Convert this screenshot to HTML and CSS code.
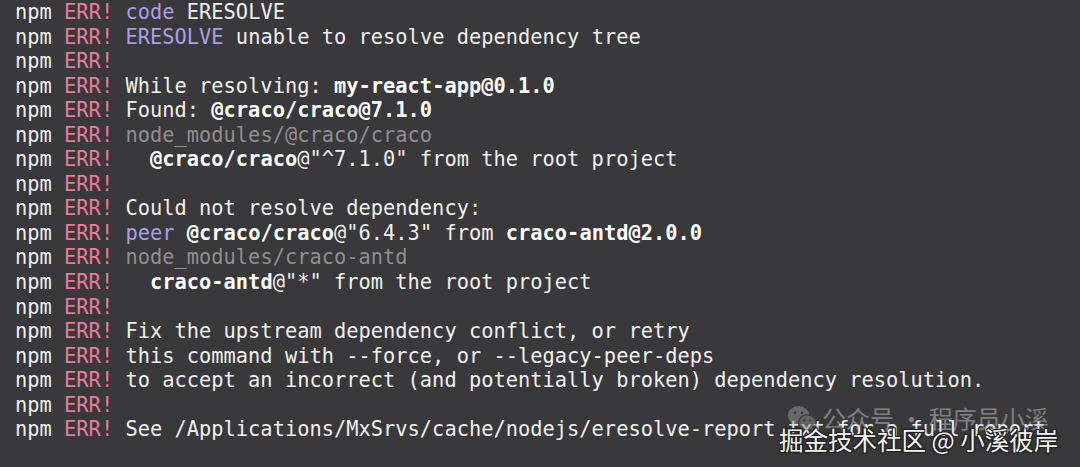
FILE: index.html
```html
<!DOCTYPE html>
<html lang="en">
<head>
<meta charset="utf-8">
<link rel="stylesheet" href="styles.css">
</head>
<body>
<div class="term">
<div class="ln"><span class="w">npm</span> <span class="e">ERR!</span> <span class="p">code</span> ERESOLVE</div>
<div class="ln">npm <span class="e">ERR!</span> <span class="p">ERESOLVE</span> unable to resolve dependency tree</div>
<div class="ln">npm <span class="e">ERR!</span></div>
<div class="ln">npm <span class="e">ERR!</span> While resolving: <b>my-react-app@0.1.0</b></div>
<div class="ln">npm <span class="e">ERR!</span> Found: <b>@craco/craco@7.1.0</b></div>
<div class="ln">npm <span class="e">ERR!</span> <span class="g">node_modules/@craco/craco</span></div>
<div class="ln">npm <span class="e">ERR!</span>   <b>@craco/craco</b>@"^7.1.0" from the root project</div>
<div class="ln">npm <span class="e">ERR!</span></div>
<div class="ln">npm <span class="e">ERR!</span> Could not resolve dependency:</div>
<div class="ln">npm <span class="e">ERR!</span> <span class="p">peer</span> <b>@craco/craco</b>@"6.4.3" from <b>craco-antd@2.0.0</b></div>
<div class="ln">npm <span class="e">ERR!</span> <span class="g">node_modules/craco-antd</span></div>
<div class="ln">npm <span class="e">ERR!</span>   <b>craco-antd</b>@"*" from the root project</div>
<div class="ln">npm <span class="e">ERR!</span></div>
<div class="ln">npm <span class="e">ERR!</span> Fix the upstream dependency conflict, or retry</div>
<div class="ln">npm <span class="e">ERR!</span> this command with --force, or --legacy-peer-deps</div>
<div class="ln">npm <span class="e">ERR!</span> to accept an incorrect (and potentially broken) dependency resolution.</div>
<div class="ln">npm <span class="e">ERR!</span></div>
<div class="ln">npm <span class="e">ERR!</span> See /Applications/MxSrvs/cache/nodejs/eresolve-report.txt for a full report.</div>
</div>
<div class="wm1">
<svg class="wx" width="30" height="28" viewBox="0 0 34 30">
<ellipse cx="13" cy="12" rx="12" ry="10.5" fill="#9a9a9a"/>
<path d="M5 19 L4 24 L10 20.5 Z" fill="#9a9a9a"/>
<ellipse cx="23" cy="20" rx="10" ry="8.5" fill="#8a8a8a" stroke="#3a393c" stroke-width="1.5"/>
<path d="M29 26 L31 30 L25 27.5 Z" fill="#8a8a8a"/>
<circle cx="9" cy="9" r="1.5" fill="#3a393c"/>
<circle cx="17" cy="9" r="1.5" fill="#3a393c"/>
<circle cx="19.5" cy="18" r="1.3" fill="#3a393c"/>
<circle cx="26.5" cy="18" r="1.3" fill="#3a393c"/>
</svg>
<span class="wmt">公众号 · 程序员小溪</span>
</div>
<div class="wm2">掘金技术社区 @ 小溪彼岸</div>
</body>
</html>
```
FILE: styles.css
```css
html, body {
  margin: 0;
  padding: 0;
  background: #39383b;
  width: 1080px;
  height: 467px;
  overflow: hidden;
}
.term {
  padding: 0 0 0 15px;
  font-family: "DejaVu Sans Mono", monospace;
  font-size: 20.35px;
  line-height: 24.55px;
  color: #f1f1f1;
  letter-spacing: 0.02px;
}
.ln {
  white-space: pre;
  height: 24.55px;
}
.e { color: #ea7b9d; }
.p { color: #a99fe4; }
.g { color: #8f8f8f; }
b { font-weight: bold; color: #ffffff; }
.wm1 {
  position: absolute;
  left: 787px;
  top: 402px;
  display: flex;
  align-items: center;
  gap: 5px;
  opacity: 0.5;
  white-space: nowrap;
}
.wmt {
  font-family: "Noto Sans CJK SC", sans-serif;
  font-size: 24px;
  line-height: 32px;
  color: #c4c4c4;
  white-space: nowrap;
}
.wm2 {
  position: absolute;
  left: 779px;
  top: 423px;
  white-space: nowrap;
  font-family: "Noto Sans CJK SC", sans-serif;
  font-size: 24.5px;
  line-height: 34px;
  color: #f4f4f4;
  text-shadow: 1px 1px 0 #222, -1px -1px 0 #222, 1px -1px 0 #222, -1px 1px 0 #222, 0 0 3px #111;
}
```
